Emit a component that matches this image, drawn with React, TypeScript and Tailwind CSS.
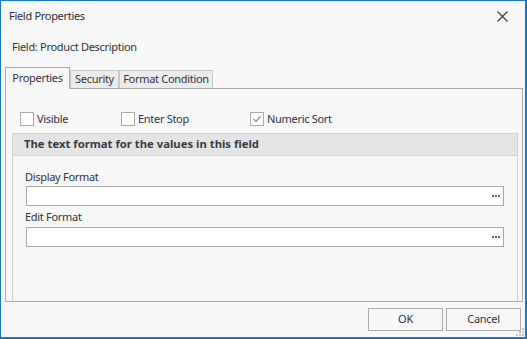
const FONT = "font-['Noto_Sans','Open_Sans',sans-serif]"

function CheckBox({ label, checked, width }: { label: string; checked?: boolean; width: string }) {
  return (
    <div className={`flex items-center ${width}`}>
      <div className="w-[14px] h-[14px] border border-[#ababab] bg-white flex items-center justify-center">
        {checked && (
          <svg width="10" height="10" viewBox="0 0 10 10">
            <polyline points="1.5,5 4,7.5 8.5,2.5" fill="none" stroke="#8c8c8c" strokeWidth="1.2" />
          </svg>
        )}
      </div>
      <span className="ml-[3px] text-[#333344] leading-[14px]">{label}</span>
    </div>
  )
}

function FormatInput() {
  return (
    <div className="ml-[13px] w-[478px] h-[20px] border border-[#ababab] bg-white flex items-center justify-end pr-[3px]">
      <div className="flex gap-[1px]">
        <span className="w-[2px] h-[2px] bg-[#6b6b6b]" />
        <span className="w-[2px] h-[2px] bg-[#6b6b6b]" />
        <span className="w-[2px] h-[2px] bg-[#6b6b6b]" />
      </div>
    </div>
  )
}

export default function App() {
  return (
    <div
      className={`${FONT} text-[11px] tracking-[-0.3px] w-[527px] h-[339px] bg-[#f7f7f7] border-[#1a78c9] border-t border-l border-r-2 border-b-2 flex flex-col overflow-hidden relative`}
    >
      {/* Title bar */}
      <div className="h-[30px] flex items-center justify-between pl-[8px] pr-[17px]">
        <span className="text-[#2e2e3a]">Field Properties</span>
        <svg width="11" height="11" viewBox="0 0 11 11">
          <path d="M0.5 0.5 L10.5 10.5 M10.5 0.5 L0.5 10.5" stroke="#3c3c3c" strokeWidth="1.2" />
        </svg>
      </div>

      {/* Field name */}
      <div className="mt-[8px] h-[16px] leading-[16px] pl-[11px] text-[#333340]">Field: Product Description</div>

      {/* Tabs */}
      <div className="mt-[12px] ml-[4px] flex items-end h-[21px] whitespace-nowrap">
        <div className="relative z-10 w-[65px] h-[22px] -mb-px border border-b-0 border-[#ababab] bg-[#f7f7f7] flex items-center justify-center text-[#333340]">
          Properties
        </div>
        <div className="w-[49px] h-[18px] border border-b-0 border-[#c9c9c9] bg-[#ebebeb] flex items-center justify-center text-[#333340]">
          Security
        </div>
        <div className="w-[94px] h-[18px] border border-b-0 border-[#c9c9c9] bg-[#ebebeb] flex items-center justify-center text-[#333340]">
          Format Condition
        </div>
      </div>

      {/* Tab panel */}
      <div className="ml-[4px] w-[518px] h-[214px] border border-[#ababab] flex flex-col overflow-hidden">
        <div className="pt-[23px] pl-[14px] flex">
          <CheckBox label="Visible" width="w-[101px]" />
          <CheckBox label="Enter Stop" width="w-[129px]" />
          <CheckBox label="Numeric Sort" checked width="w-[120px]" />
        </div>

        {/* Group */}
        <div className="mt-[7px] ml-[6px] w-[506px] flex-1 border border-b-0 border-[#d2d2d2] flex flex-col">
          <div className="h-[22px] bg-[#e4e4e4] border-b border-[#d2d2d2] flex items-center pl-[11px] font-bold text-[11.3px] tracking-normal text-[#3a3a44]">
            The text format for the values in this field
          </div>
          <div className="mt-[13px] pl-[12px] h-[16px] leading-[16px] text-[#333340]">Display Format</div>
          <div className="mt-[1px]">
            <FormatInput />
          </div>
          <div className="mt-[3px] pl-[12px] h-[16px] leading-[16px] text-[#333340]">Edit Format</div>
          <div className="mt-[2px]">
            <FormatInput />
          </div>
        </div>
      </div>

      {/* Footer */}
      <div className="mt-[6px] flex justify-end gap-[3px] pr-[4px]">
        <button className="w-[75px] h-[23px] border border-[#acacac] bg-[#f7f7f7] text-[#333340]">OK</button>
        <button className="w-[75px] h-[23px] border border-[#acacac] bg-[#f7f7f7] text-[#333340]">Cancel</button>
      </div>

      {/* Resize grip */}
      <div className="absolute right-[1px] bottom-[1px] grid grid-cols-3 gap-[1px]">
        <span />
        <span />
        <span className="w-[2px] h-[2px] bg-[#c4c4c4]" />
        <span />
        <span className="w-[2px] h-[2px] bg-[#c4c4c4]" />
        <span className="w-[2px] h-[2px] bg-[#c4c4c4]" />
        <span className="w-[2px] h-[2px] bg-[#c4c4c4]" />
        <span className="w-[2px] h-[2px] bg-[#c4c4c4]" />
        <span className="w-[2px] h-[2px] bg-[#c4c4c4]" />
      </div>
    </div>
  )
}
